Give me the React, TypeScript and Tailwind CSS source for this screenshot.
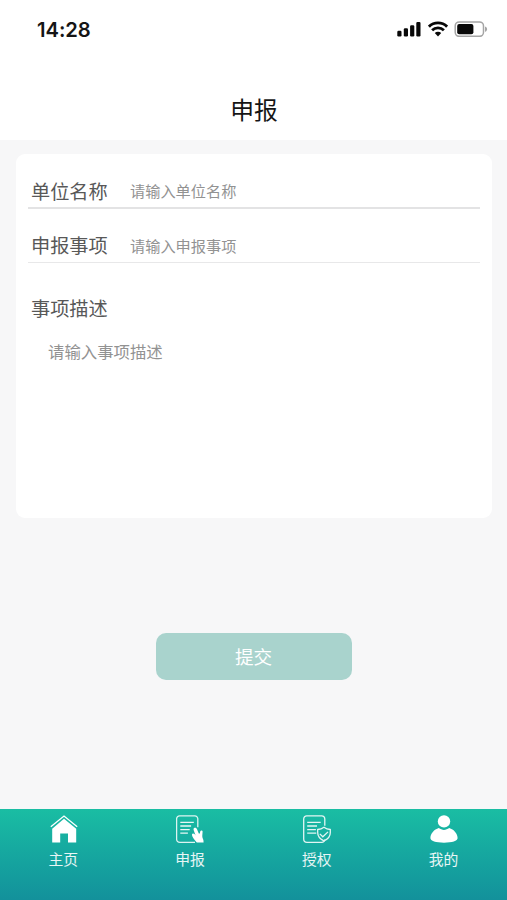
import type { ReactNode } from "react";

function StatusBar() {
  return (
    <div className="flex h-[60px] shrink-0 items-start justify-between pl-[37px] pr-[19px]">
      <span className="mt-[17px] font-['Inter'] text-[20.2px] font-semibold leading-[26px] tracking-[-0.05px] text-[#151515]">
        14:28
      </span>
      <div className="mt-[21px] flex items-start">
        <svg width="24" height="16" viewBox="0 0 24 16" fill="#080808">
          <rect x="0.3" y="9.7" width="4.2" height="5.8" rx="1.2" />
          <rect x="6.8" y="7.2" width="4.2" height="8.3" rx="1.2" />
          <rect x="13.1" y="4.2" width="4.2" height="11.3" rx="1.2" />
          <rect x="19.3" y="0.9" width="4.2" height="14.6" rx="1.2" />
        </svg>
        <svg className="ml-[7px]" width="20" height="16" viewBox="0 0 20 16" fill="none" stroke="#080808">
          <path d="M.9 5.6a13 13 0 0 1 18.2 0" strokeWidth="2.9" />
          <path d="M4.1 9.3a8.4 8.4 0 0 1 11.8 0" strokeWidth="2.8" />
          <path d="M6.8 12.1a4.5 4.5 0 0 1 6.4 0L10 15.4Z" fill="#080808" stroke="none" />
        </svg>
        <svg className="ml-[6px]" width="34" height="16" viewBox="0 0 34 16">
          <rect x="1.2" y="0.9" width="28.3" height="14.4" rx="4" fill="white" stroke="#a5a5a5" strokeWidth="1.5" />
          <rect x="3.2" y="3" width="16.2" height="10.3" rx="2" fill="#080808" />
          <path d="M31 5.4c2.8.8 2.8 4.6 0 5.4Z" fill="#a5a5a5" />
        </svg>
      </div>
    </div>
  );
}

function HomeIcon() {
  return (
    <svg className="translate-x-px" width="28" height="28" viewBox="0 0 28 28" fill="none">
      <path d="M.8 11.8 14 1l13.2 10.8" stroke="white" strokeWidth="1.3" />
      <path d="M14 3.8 26.2 13.8V27.5H18v-9h-7.8v9h-8V13.8Z" fill="white" />
    </svg>
  );
}

function ReportIcon() {
  return (
    <svg width="28" height="28" viewBox="0 0 28 28" fill="none" stroke="white" strokeWidth="1.3">
      <path d="M21.8 12.2V4.2A3 3 0 0 0 18.8.9H3.6a3 3 0 0 0-3 3V24a3.3 3.3 0 0 0 3.3 3.3H19" opacity=".85" />
      <path d="M4.3 7.4h13.5M4.3 11h10.8M4.3 14.6h9.4M4.3 18.2h7.6" opacity=".9" />
      <path
        d="M18.5 12.8c1.2-.4 2 .2 2.4 1.3l1.9 4.4h1l.5-2.2c.3-1.3 2.4-1.1 2.3.3l-.3 4.1c-.1 1.7.6 3 1.1 4.3l.2 2.6h-6.8c-1-1.5-2.8-3-3.7-4.8-.8-1.5-1.3-2.7-1-3.7.3-1 1.7-.8 2.4 0l1.1 1.3-1.9-5.2c-.4-1.1-.2-2 .8-2.4Z"
        fill="white"
        stroke="none"
      />
    </svg>
  );
}

function AuthorizeIcon() {
  return (
    <svg width="28" height="28" viewBox="0 0 28 28" fill="none" stroke="white" strokeWidth="1.3" opacity=".88">
      <path d="M21.8 10.7V4A3 3 0 0 0 18.8.9H3.7a3 3 0 0 0-3 3V24A3.3 3.3 0 0 0 4 27.3h14.7a3 3 0 0 0 3-2.8" />
      <path d="M4.2 7.4h13.5M4.2 11h9.8M4.2 14.6h8.7M4.2 18.2h9.1" />
      <path d="M21 12.3c2 1.5 3.9 2.1 6.3 2.2v3.2c0 3.7-2.7 6.5-6.3 8.1-3.6-1.6-6.3-4.4-6.3-8.1v-3.2c2.4-.1 4.3-.7 6.3-2.2Z" />
      <path d="m16.8 18.9 3 2.9 5.2-4.9" />
    </svg>
  );
}

function PersonIcon() {
  return (
    <svg width="28" height="28" viewBox="0 0 28 28" fill="white">
      <circle cx="14" cy="6.4" r="6.2" />
      <path d="M8.8 13.1c3.2 2.4 7.2 2.4 10.4 0 4.7 1.4 8.3 5.6 8.4 10 .1 3.1-5.5 4.6-13.6 4.6S.3 26.2.4 23.1c.1-4.4 3.7-8.6 8.4-10Z" />
    </svg>
  );
}

function Field({ label, placeholder, line }: { label: string; placeholder: string; line: string }) {
  return (
    <label className={`flex items-center pl-[3px] ${line}`}>
      <span className="w-[99px] shrink-0 text-[19.2px] leading-7 text-[#585858]">{label}</span>
      <input
        className="min-w-0 flex-1 bg-transparent pb-px text-[15.2px] leading-6 outline-none placeholder:text-[#929292]"
        placeholder={placeholder}
      />
    </label>
  );
}

function Tab({ label, children }: { label: string; children: ReactNode }) {
  return (
    <button className="flex flex-1 flex-col items-center pt-[6px] text-[14.8px] text-white">
      {children}
      <span className="mt-[5px] leading-[22px] text-white/90">{label}</span>
    </button>
  );
}

export default function App() {
  return (
    <main className="flex h-[900px] w-full flex-col bg-[#f7f7f8] font-['Noto_Sans_CJK_SC',sans-serif]">
      <header className="h-[140px] shrink-0 bg-white">
        <StatusBar />
        <h1 className="pl-px pt-[31px] text-center text-[23.8px] leading-9 text-[#151515]">申报</h1>
      </header>
      <form className="flex flex-1 flex-col items-center px-[15.5px] pt-[13.5px]">
        <section className="h-[364px] w-full rounded-[9px] bg-white pl-[12.5px] pr-3">
          <Field label="单位名称" placeholder="请输入单位名称" line="h-[55px] border-b-2 border-[#e3e3e4] pt-[21px]" />
          <Field label="申报事项" placeholder="请输入申报事项" line="h-[54px] border-b border-[#e8e8e9] pt-5" />
          <label className="block pl-[3px] pt-[31px]">
            <span className="block text-[19.2px] leading-7 text-[#585858]">事项描述</span>
            <textarea
              className="mt-[17px] block h-[150px] w-full resize-none bg-transparent pl-[17px] text-[16.4px] leading-6 outline-none placeholder:text-[#929292]"
              placeholder="请输入事项描述"
            />
          </label>
        </section>
        <button
          type="button"
          className="mt-[115.5px] h-[47px] w-[196px] rounded-[10px] bg-[#a9d3cd] pb-0.5 text-[18.6px] leading-7 text-white"
        >
          提交
        </button>
      </form>
      <nav className="flex h-[91px] shrink-0 bg-linear-to-b from-[#1abda3] to-[#13919b]">
        <Tab label="主页"><HomeIcon /></Tab>
        <Tab label="申报"><ReportIcon /></Tab>
        <Tab label="授权"><AuthorizeIcon /></Tab>
        <Tab label="我的"><PersonIcon /></Tab>
      </nav>
    </main>
  );
}
